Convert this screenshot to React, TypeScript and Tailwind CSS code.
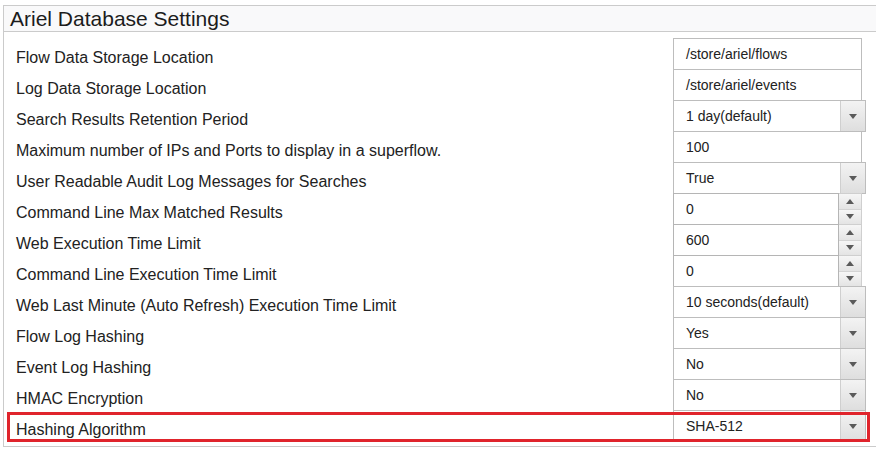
import React from 'react';

type Kind = 'text' | 'select' | 'spin';

interface Setting {
  label: string;
  value: string;
  kind: Kind;
}

const settings: Setting[] = [
  { label: 'Flow Data Storage Location', value: '/store/ariel/flows', kind: 'text' },
  { label: 'Log Data Storage Location', value: '/store/ariel/events', kind: 'text' },
  { label: 'Search Results Retention Period', value: '1 day(default)', kind: 'select' },
  { label: 'Maximum number of IPs and Ports to display in a superflow.', value: '100', kind: 'text' },
  { label: 'User Readable Audit Log Messages for Searches', value: 'True', kind: 'select' },
  { label: 'Command Line Max Matched Results', value: '0', kind: 'spin' },
  { label: 'Web Execution Time Limit', value: '600', kind: 'spin' },
  { label: 'Command Line Execution Time Limit', value: '0', kind: 'spin' },
  { label: 'Web Last Minute (Auto Refresh) Execution Time Limit', value: '10 seconds(default)', kind: 'select' },
  { label: 'Flow Log Hashing', value: 'Yes', kind: 'select' },
  { label: 'Event Log Hashing', value: 'No', kind: 'select' },
  { label: 'HMAC Encryption', value: 'No', kind: 'select' },
  { label: 'Hashing Algorithm', value: 'SHA-512', kind: 'select' },
];

function Caret({ up = false }: { up?: boolean }) {
  return (
    <svg width="8" height="5" viewBox="0 0 8 5" className="block">
      <path d={up ? 'M0 5 L4 0 L8 5 Z' : 'M0 0 L8 0 L4 5 Z'} fill="#5a5a5a" />
    </svg>
  );
}

function Control({ s }: { s: Setting }) {
  if (s.kind === 'select') {
    return (
      <div className="flex h-[32px] w-[193px] border border-[#bdbdbd] bg-white">
        <div className="flex flex-1 items-center pl-[12px] text-[14px] text-[#222]">{s.value}</div>
        <div className="flex w-[25px] items-center justify-center border-l border-[#cfcfcf] bg-gradient-to-b from-[#f3f3f3] to-[#dedede]">
          <Caret />
        </div>
      </div>
    );
  }
  if (s.kind === 'spin') {
    return (
      <div className="flex h-[32px] w-[189px]">
        <div className="flex flex-1 items-center border border-[#b5b5b5] bg-white pl-[12px] text-[14px] text-[#222]">
          {s.value}
        </div>
        <div className="flex w-[23px] flex-col border-y border-r border-[#cfcfcf]">
          <div className="flex flex-1 items-center justify-center border-b border-[#d4d4d4] bg-gradient-to-b from-[#f6f6f6] to-[#e4e4e4]">
            <Caret up />
          </div>
          <div className="flex flex-1 items-center justify-center bg-gradient-to-b from-[#f6f6f6] to-[#e4e4e4]">
            <Caret />
          </div>
        </div>
      </div>
    );
  }
  return (
    <div className="flex h-[32px] w-[189px] items-center border border-[#bdbdbd] bg-white pl-[12px] text-[14px] text-[#222]">
      {s.value}
    </div>
  );
}

export default function App() {
  return (
    <div className="h-[450px] w-[876px] overflow-hidden bg-white pl-[3px] pt-[5px] font-['Liberation_Sans',Arial,sans-serif]">
      <div className="border-y border-l border-[#cbcbcb]">
        <div className="flex h-[26px] items-center border-b border-[#cbcbcb] bg-[#f9f9fa] pl-[6px] text-[21px] text-[#1c1c1c]">
          Ariel Database Settings
        </div>
        <div className="pb-[5px] pt-[6px]">
          {settings.map((s, i) => (
            <div key={s.label} className="relative grid h-[31px] grid-cols-[669px_193px] items-start">
              <div className="pl-[12px] pt-[11px] text-[16px] leading-[18px] text-[#222]">{s.label}</div>
              <Control s={s} />
              {i === settings.length - 1 && (
                <div className="absolute left-[3px] top-[2px] h-[30px] w-[863px] border-[3px] border-[#e0242c]" />
              )}
            </div>
          ))}
        </div>
      </div>
    </div>
  );
}
